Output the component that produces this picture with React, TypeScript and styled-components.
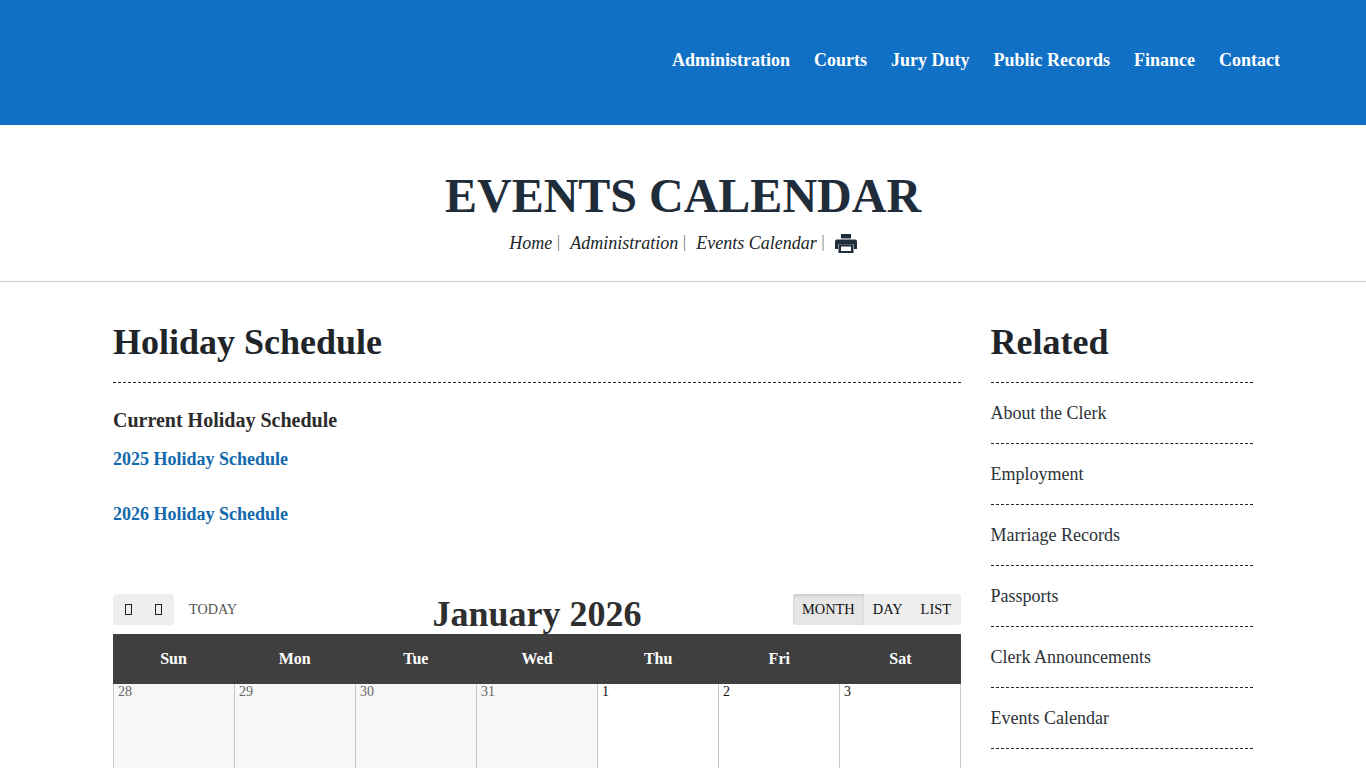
import styled, {createGlobalStyle} from 'styled-components';

const GlobalStyle = createGlobalStyle`
  html, body {
    margin: 0;
    padding: 0;
    background: #fff;
    overflow: hidden;
    font-family: "Liberation Serif", "Times New Roman", serif;
    color: #212529;
  }
`;

const Page = styled.div`
  width: 1366px;
  height: 768px;
  overflow: hidden;
`;

const TopBar = styled.header`
  display: flex;
  justify-content: flex-end;
  align-items: center;
  height: 125px;
  padding: 0 86px 6px 0;
  box-sizing: border-box;
  background: #0f70c5;
`;

const Nav = styled.nav`
  display: flex;
  gap: 24px;
`;

const NavLink = styled.a`
  color: #fff;
  font-size: 18px;
  line-height: 24px;
  font-weight: 700;
`;

const TitleBlock = styled.section`
  display: flex;
  flex-direction: column;
  align-items: center;
  height: 157px;
  padding-top: 43px;
  box-sizing: border-box;
  border-bottom: 1px solid #ccc;
`;

const PageTitle = styled.h1`
  margin: 0;
  font-size: 48px;
  line-height: 56px;
  font-weight: 700;
  color: #1f2d3a;
`;

const Crumbs = styled.div`
  display: flex;
  align-items: center;
  height: 24px;
  margin-top: 7px;
  padding-left: 8px;
  font-size: 18px;
  font-style: italic;
  color: #212529;
`;

const Crumb = styled.a`
  margin-right: 18px;
  position: relative;

  &::after {
    content: '|';
    position: absolute;
    right: -8px;
    top: -1px;
    font-style: normal;
    font-size: 17px;
    color: #777;
  }
`;

const PrintIcon = () => (
  <svg width="22" height="19" viewBox="0 0 22 19" fill="#1f2d3a" style={{marginRight: 8}}>
    <path d="M6 0h10v4.5H6z" />
    <path d="M2 5.5h18a2 2 0 0 1 2 2V15h-3v-4.5H3V15H0V7.5a2 2 0 0 1 2-2z" />
    <path d="M3.5 10.5h15V19h-15zM6 12.5V17h10v-4.5z" fillRule="evenodd" />
  </svg>
);

const Content = styled.div`
  display: flex;
  gap: 29.5px;
  padding: 40px 113px 0;
`;

const Main = styled.main`
  width: 848px;
  flex: none;
`;

const Side = styled.aside`
  width: 262.5px;
  flex: none;
`;

const SectionTitle = styled.h2`
  margin: 0;
  height: 60px;
  font-size: 36px;
  line-height: 40px;
  font-weight: 700;
  color: #212529;
  border-bottom: 1px dashed #222;
`;

const SubTitle = styled.h3`
  margin: 25px 0 0;
  font-size: 20px;
  line-height: 24px;
  font-weight: 700;
  color: #2b2b2b;
`;

const DocLink = styled.a<{$gap: number}>`
  display: block;
  margin-top: ${({$gap}) => $gap}px;
  font-size: 18px;
  line-height: 24px;
  font-weight: 700;
  color: #1269ad;
`;

const Toolbar = styled.div`
  position: relative;
  display: flex;
  justify-content: space-between;
  height: 40px;
  margin-top: 68px;
`;

const ToolLeft = styled.div`
  display: flex;
  align-items: flex-start;
`;

const ArrowGroup = styled.div`
  display: flex;
  height: 31px;
  background: #eee;
  border-radius: 3px;
`;

const ArrowButton = styled.span`
  display: flex;
  align-items: center;
  justify-content: center;
  width: 30.5px;
  height: 31px;

  &::before {
    content: '';
    width: 5px;
    height: 9px;
    border: 1px solid #222;
  }
`;

const Today = styled.span`
  margin-left: 15px;
  font-size: 14.2px;
  line-height: 31px;
  color: #555;
`;

const MonthTitle = styled.h2`
  margin: 0;
  position: absolute;
  left: 0;
  right: 0;
  top: 0;
  text-align: center;
  font-size: 36px;
  line-height: 40px;
  font-weight: 700;
  color: #2f2f2f;
`;

const ViewGroup = styled.div`
  display: flex;
  height: 31px;
  padding-right: 1px;
  background: #eee;
  border-radius: 3px;
  position: relative;
`;

const ViewButton = styled.span<{$active?: boolean}>`
  padding: 0 9px;
  font-size: 14.4px;
  line-height: 31px;
  color: #111;
  background: ${({$active}) => ($active ? '#e6e6e6' : 'transparent')};
  box-shadow: ${({$active}) => ($active ? 'inset 0 2px 3px rgba(0, 0, 0, 0.12)' : 'none')};
  border-radius: ${({$active}) => ($active ? '3px 0 0 3px' : '0')};
`;

const WeekHead = styled.div`
  display: grid;
  grid-template-columns: repeat(7, 1fr);
  height: 50px;
  background: #3f3f3f;
`;

const WeekDay = styled.div`
  font-size: 16px;
  line-height: 50px;
  font-weight: 700;
  text-align: center;
  color: #fff;
`;

const DayRow = styled.div`
  display: grid;
  grid-template-columns: repeat(7, 1fr);
  height: 120px;
  box-sizing: border-box;
  border-left: 1px solid #c8c8c8;
`;

const DayCell = styled.div<{$muted?: boolean}>`
  padding: 0 0 0 4px;
  font-size: 14px;
  line-height: 16px;
  border-right: 1px solid #c8c8c8;
  background: ${({$muted}) => ($muted ? '#f7f7f7' : '#fff')};
  color: ${({$muted}) => ($muted ? '#666' : '#111')};
`;

const RelatedLink = styled.a`
  display: block;
  height: 60px;
  font-size: 18px;
  line-height: 60px;
  color: #2b3238;
  border-bottom: 1px dashed #222;
`;

const navItems = ['Administration', 'Courts', 'Jury Duty', 'Public Records', 'Finance', 'Contact'];
const crumbs = ['Home', 'Administration', 'Events Calendar'];
const weekDays = ['Sun', 'Mon', 'Tue', 'Wed', 'Thu', 'Fri', 'Sat'];
const firstWeek = [
  {day: 28, muted: true},
  {day: 29, muted: true},
  {day: 30, muted: true},
  {day: 31, muted: true},
  {day: 1},
  {day: 2},
  {day: 3},
];
const related = [
  'About the Clerk',
  'Employment',
  'Marriage Records',
  'Passports',
  'Clerk Announcements',
  'Events Calendar',
];

const App = () => (
  <Page>
    <GlobalStyle />
    <TopBar>
      <Nav>
        {navItems.map((item) => (
          <NavLink key={item}>{item}</NavLink>
        ))}
      </Nav>
    </TopBar>
    <TitleBlock>
      <PageTitle>EVENTS CALENDAR</PageTitle>
      <Crumbs>
        {crumbs.map((crumb) => (
          <Crumb key={crumb}>{crumb}</Crumb>
        ))}
        <PrintIcon />
      </Crumbs>
    </TitleBlock>
    <Content>
      <Main>
        <SectionTitle>Holiday Schedule</SectionTitle>
        <SubTitle>Current Holiday Schedule</SubTitle>
        <DocLink $gap={15}>2025 Holiday Schedule</DocLink>
        <DocLink $gap={31}>2026 Holiday Schedule</DocLink>
        <Toolbar>
          <ToolLeft>
            <ArrowGroup>
              <ArrowButton />
              <ArrowButton />
            </ArrowGroup>
            <Today>TODAY</Today>
          </ToolLeft>
          <MonthTitle>January 2026</MonthTitle>
          <ViewGroup>
            <ViewButton $active>MONTH</ViewButton>
            <ViewButton>DAY</ViewButton>
            <ViewButton>LIST</ViewButton>
          </ViewGroup>
        </Toolbar>
        <WeekHead>
          {weekDays.map((day) => (
            <WeekDay key={day}>{day}</WeekDay>
          ))}
        </WeekHead>
        <DayRow>
          {firstWeek.map(({day, muted}) => (
            <DayCell key={day} $muted={muted}>
              {day}
            </DayCell>
          ))}
        </DayRow>
      </Main>
      <Side>
        <SectionTitle>Related</SectionTitle>
        {related.map((item) => (
          <RelatedLink key={item}>{item}</RelatedLink>
        ))}
      </Side>
    </Content>
  </Page>
);

export default App;
